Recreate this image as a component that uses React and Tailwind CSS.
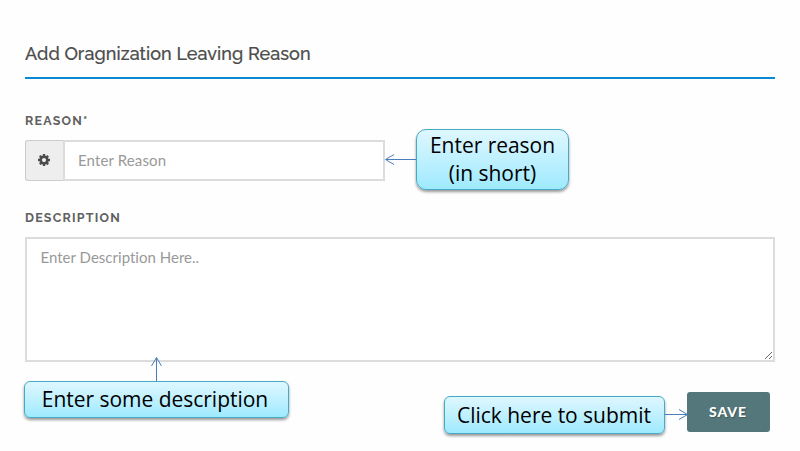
function GearIcon() {
  return (
    <svg className="mr-px mb-px h-3 w-3" viewBox="0 128 1536 1536" fill="#4c4c4c">
      <path d="M1024 896q0-106-75-181t-181-75-181 75-75 181 75 181 181 75 181-75 75-181zm512-109v222q0 12-8 23t-20 13l-185 28q-19 54-39 91 35 50 107 138 10 12 10 25t-9 23q-27 37-99 108t-94 71q-12 0-26-9l-138-108q-44 23-91 38-16 136-29 186-7 28-36 28h-222q-14 0-24.500-8.500t-11.500-21.500l-28-184q-49-16-90-37l-141 107q-10 9-25 9-14 0-25-11-126-114-165-168-7-10-7-23 0-12 8-23 15-21 51-66.500t54-70.500q-27-50-41-99l-183-27q-13-2-21-12.500t-8-23.500v-222q0-12 8-23t19-13l186-28q14-46 39-92-40-57-107-138-10-12-10-24 0-10 9-23 26-36 98.500-107.500t94.500-71.500q13 0 26 10l138 107q44-23 91-38 16-136 29-186 7-28 36-28h222q14 0 24.500 8.500t11.500 21.500l28 184q49 16 90 37l142-107q9-9 24-9 13 0 25 10 129 119 165 170 7 8 7 22 0 12-8 23-15 21-51 66.500t-54 70.500q26 50 41 98l183 28q13 2 21 12.500t8 23.500z" />
    </svg>
  );
}

function Callout({ className, children }) {
  return (
    <div
      className={
        "absolute flex items-center justify-center whitespace-nowrap border border-[#46aac5] bg-linear-to-b from-[#def7ff] to-[#9eeaff] text-center font-['Open_Sans',sans-serif] text-black shadow-[0_2px_3px_rgba(0,0,0,0.4)] " +
        className
      }
    >
      {children}
    </div>
  );
}

export default function App() {
  return (
    <main className="relative h-[451px] w-[800px] overflow-hidden bg-[#fefefe] px-[25px] pt-10 font-['Lato',sans-serif]">
      <h1 className="h-[39px] whitespace-nowrap border-b-2 border-[#0a88d2] font-['Raleway','Lato',sans-serif] text-[18px] leading-[28px] font-medium text-[#4c4c4c] [-webkit-text-stroke:0.2px_#4c4c4c]">
        <span className="tracking-[0.07px]">Add Oragnization Leaving Reason</span>
      </h1>
      <form>
        <label className="mt-[33px] block h-[17px] font-['Raleway','Lato',sans-serif] text-[12.5px] leading-[17px] font-bold tracking-[1.2px] text-[#606060]">
          REASON*
        </label>
        <div className="mt-[11px] flex h-[41px] w-[360px]">
          <span className="flex w-[38px] items-center justify-center rounded-l-[3px] border border-r-0 border-[#ccc] bg-[#eee]">
            <GearIcon />
          </span>
          <input
            placeholder="Enter Reason"
            className="min-w-0 flex-1 border-2 border-[#dcdcdc] bg-white px-[13px] text-[15px] tracking-[0.13px] placeholder:text-[#999] placeholder:opacity-100"
          />
        </div>
        <label className="mt-[28px] block h-[17px] font-['Raleway','Lato',sans-serif] text-[12.5px] leading-[17px] font-bold tracking-[1.2px] text-[#606060]">
          DESCRIPTION
        </label>
        <textarea
          placeholder="Enter Description Here.."
          className="mt-[11px] block h-[125px] w-[750px] resize border-2 border-[#dcdcdc] bg-white px-[13.5px] py-[8px] text-[15px] leading-[21px] tracking-[0.02px] placeholder:text-[#999] placeholder:opacity-100"
        />
        <div className="mt-[30px] flex justify-end pr-[5px]">
          <button
            type="button"
            className="h-10 w-[83px] rounded-[3px] bg-[#53777a] pr-px pb-[2px] text-[14px] font-black tracking-[0.9px] text-white [text-shadow:1px_1px_1px_rgba(0,0,0,0.25)]"
          >
            SAVE
          </button>
        </div>
      </form>

      <Callout className="top-[129px] left-[416px] h-[61px] w-[153px] rounded-[10px] pb-px text-[21px] leading-[28px] tracking-[-0.03px]">
        <span>
          Enter reason
          <br />
          (in short)
        </span>
      </Callout>
      <Callout className="top-[381px] left-[24px] h-[37px] w-[265px] rounded-[6px] pr-[3px] text-[21px] leading-[29px] tracking-[-0.03px]">
        <span>Enter some description</span>
      </Callout>
      <Callout className="top-[396px] left-[444px] h-[38px] w-[221px] rounded-[6px] pr-px text-[21px] leading-[29px] tracking-[-0.03px]">
        <span>Click here to submit</span>
      </Callout>

      <svg className="pointer-events-none absolute inset-0 h-full w-full" fill="none" stroke="#4a7ebb">
        <path d="M416 159.500H386M394 154.500l-8.500 5 8.500 5" />
        <path d="M156.500 381V358M151.500 366l5-8.500 5 8.500" />
        <path d="M665 414.500H687M679 409.500l8.500 5-8.500 5" />
      </svg>
    </main>
  );
}
